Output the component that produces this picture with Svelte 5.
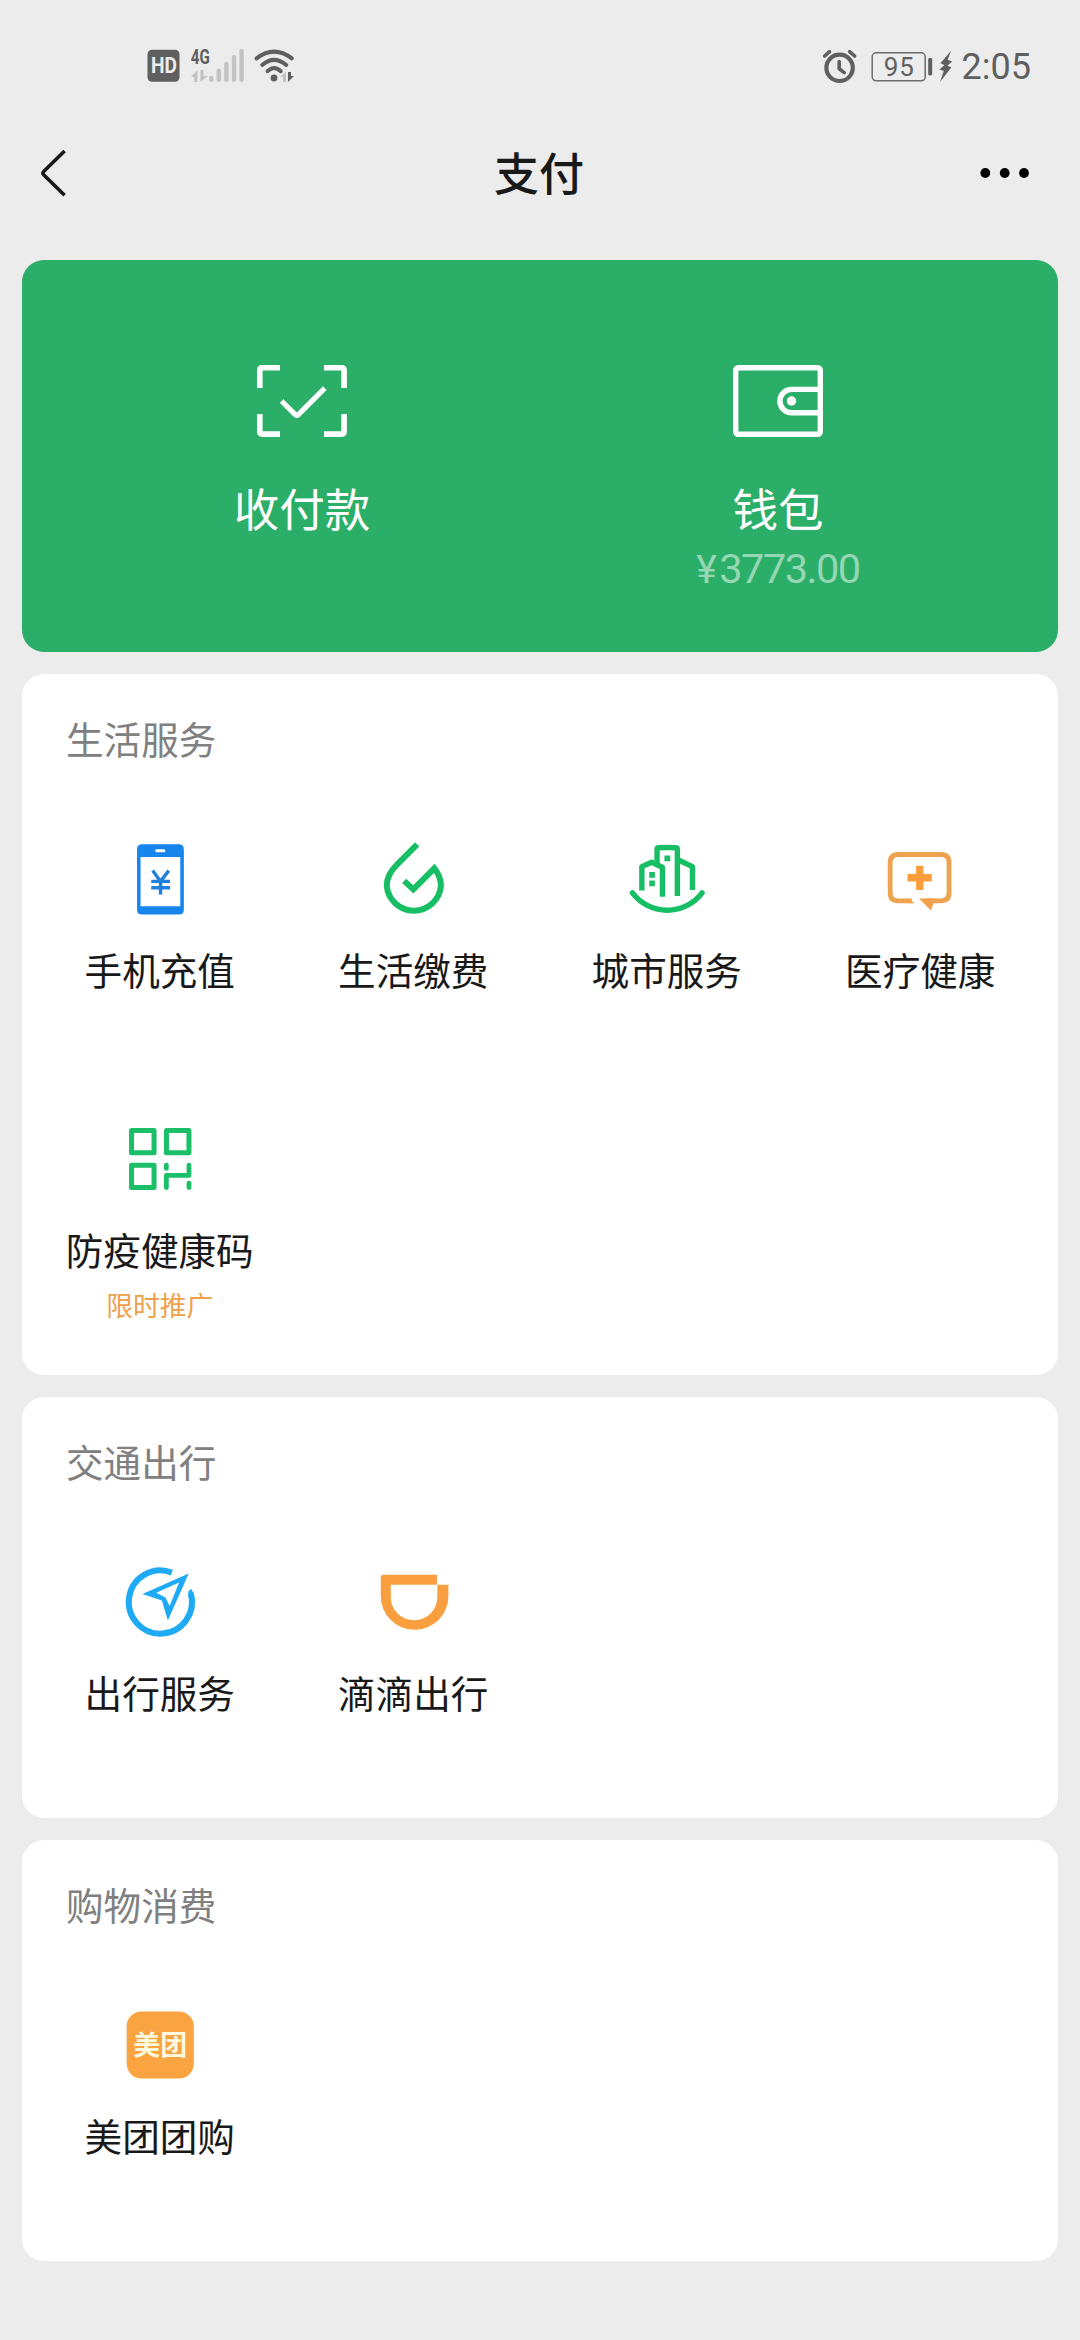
<script>
  const sections = [
    {
      title: '生活服务',
      rows: 2,
      items: [
        { icon: 'phone', label: '手机充值' },
        { icon: 'drop', label: '生活缴费' },
        { icon: 'city', label: '城市服务' },
        { icon: 'medical', label: '医疗健康' },
        { icon: 'qr', label: '防疫健康码', note: '限时推广' }
      ]
    },
    {
      title: '交通出行',
      items: [
        { icon: 'travel', label: '出行服务' },
        { icon: 'didi', label: '滴滴出行' }
      ]
    },
    {
      title: '购物消费',
      items: [{ icon: 'meituan', label: '美团团购' }]
    }
  ];
</script>

<main class="screen">
  <header class="status">
    <div class="status-left">
      <svg width="34" height="34" viewBox="147 50 34 34">
        <rect x="147.5" y="50.7" width="32" height="32" rx="4.5" fill="#5f5f5f" />
        <text x="151" y="74.3" font-size="22" font-weight="700" textLength="26" lengthAdjust="spacingAndGlyphs" fill="#ececec">HD</text>
      </svg>
      <svg class="signal" width="56" height="50" viewBox="190 41 56 50">
        <text x="190.8" y="64" font-size="21" font-weight="700" textLength="19" lengthAdjust="spacingAndGlyphs" fill="#5f5f5f">4G</text>
        <g stroke="#c3c3c3" stroke-width="4.4" stroke-linecap="round">
          <path d="M211.4 78V79.8M218.8 71V79.8M226.4 64V79.8M234 57.3V79.8M241.6 51.3V79.8" />
        </g>
        <path d="M191 77L197.4 70V82H194.2V77ZM200.4 70H203.4V76H208L200.4 82Z" fill="#c3c3c3" />
      </svg>
      <svg width="42" height="36" viewBox="253 48 42 36">
        <g fill="none" stroke="#5f5f5f" stroke-width="4" stroke-linecap="round">
          <path d="M255.6 58.4Q273 44.8 290.8 58.4" />
          <path d="M261.2 65Q273 54.6 285.2 65" />
          <path d="M266.6 71.2Q273 64.6 279.8 71.2" />
        </g>
        <circle cx="273" cy="78" r="3.4" fill="#5f5f5f" />
        <path d="M279 77L285 72V82H282V77Z" fill="#c3c3c3" />
        <path d="M287 72V82L293 76H290V72Z" fill="#5f5f5f" />
      </svg>
    </div>
    <div class="status-right">
      <svg width="36" height="36" viewBox="821 48 36 36">
        <circle cx="838.6" cy="67.8" r="13.2" fill="none" stroke="#5f5f5f" stroke-width="4.2" />
        <path d="M838.2 61.5V68.8L843.2 72.6" fill="none" stroke="#5f5f5f" stroke-width="3.6" stroke-linecap="round" stroke-linejoin="round" />
        <path d="M823.6 56L828.6 51.6M848.6 51.6L853.6 56" stroke="#5f5f5f" stroke-width="3.6" stroke-linecap="round" />
      </svg>
      <svg class="battery" width="84" height="36" viewBox="870 48 84 36">
        <rect x="871.2" y="52.8" width="53" height="28" rx="4" fill="none" stroke="#6c6c6c" stroke-width="1.5" />
        <text x="882.8" y="75.6" font-size="26" textLength="30" fill="#606060">95</text>
        <rect x="927.2" y="58" width="4" height="17.4" rx="1.4" fill="#5f5f5f" />
        <path d="M950.3 50.5L939.4 63.2L943.5 65L938.4 69.4L942.8 71L939 82L950.3 67.5L946.5 65.6L951.2 61.4L946.6 59.8Z" fill="#5f5f5f" />
      </svg>
      <span class="time">2:05</span>
    </div>
  </header>

  <nav class="nav">
    <svg width="30" height="52" viewBox="38 147 30 52">
      <path d="M64.6 151L43.9 171.2Q42 173.1 43.9 175L64.6 195.2" fill="none" stroke="#191919" stroke-width="3.6" />
    </svg>
    <h1>支付</h1>
    <svg width="52" height="14" viewBox="979 166 52 14">
      <circle cx="985.3" cy="173" r="4.9" />
      <circle cx="1004.7" cy="173" r="4.9" />
      <circle cx="1024" cy="173" r="4.9" />
    </svg>
  </nav>

  <section class="pay">
    <div class="pay-item">
      <svg width="96" height="80" viewBox="254 361 96 80">
        <g fill="none" stroke="#fff" stroke-width="5.6">
          <path d="M259.8 388V370.3Q259.8 367.8 262.3 367.8H280M324 367.8H341.5Q344.1 367.8 344.1 370.3V388M344.1 414V431.5Q344.1 434.1 341.5 434.1H324M280 434.1H262.3Q259.8 434.1 259.8 431.5V414" />
          <path d="M281.6 401L295 414.4Q296.8 416.2 298.6 414.4L324.8 388.2" stroke-width="5.2" />
        </g>
      </svg>
      <span class="pay-label">收付款</span>
    </div>
    <div class="pay-item">
      <svg width="96" height="80" viewBox="729 361 96 80">
        <g fill="none" stroke="#fff" stroke-width="5.4">
          <rect x="734.7" y="367.7" width="84.6" height="66.5" rx="2.5" />
          <path d="M819 389.4H790.6A11.7 11.7 0 0 0 790.6 412.8H819" />
        </g>
        <circle cx="790.5" cy="401" r="4.7" fill="#fff" />
      </svg>
      <span class="pay-label">钱包</span>
      <span class="amount"><span class="yen">¥</span>3773.00</span>
    </div>
  </section>

  {#each sections as section}
    <section class="card" class:tall={section.rows === 2}>
      <h2>{section.title}</h2>
      <div class="grid">
        {#each section.items as item}
          <div class="item">
            {#if item.icon === 'phone'}
              <svg width="90" height="90" viewBox="114.75 835 90 90">
                <path fill="#1685ec" fill-rule="evenodd" d="M142 844.3H178.5Q183.6 844.3 183.6 849.4V909.4Q183.6 914.6 178.5 914.6H142Q136.8 914.6 136.8 909.4V849.4Q136.8 844.3 142 844.3ZM140.3 857V906.2H180V857ZM156 849.3Q155 849.3 155 850.8Q155 852.2 156 852.2H164Q165 852.2 165 850.8Q165 849.3 164 849.3Z" />
                <path d="M152.4 870.6L160.3 881.4L168.5 870.6M160.3 881V894.6M151 881.4H169.8M151 887.7H169.8" fill="none" stroke="#1f80dd" stroke-width="3.4" />
              </svg>
            {:else if item.icon === 'drop'}
              <svg width="90" height="90" viewBox="368.25 835 90 90">
                <path d="M417.4 844.4L397 864.8Q387 874.6 387 885.8A27.2 27.2 0 0 0 441.2 885.8Q441.2 876.6 434.6 868.3L413.6 889.4L404.4 880.9" fill="none" stroke="#18be64" stroke-width="6" />
              </svg>
            {:else if item.icon === 'city'}
              <svg width="90" height="90" viewBox="621.75 835 90 90">
                <g fill="none" stroke="#18be64" stroke-width="5.4" stroke-linejoin="round">
                  <path d="M632.2 892.8A43.5 43.5 0 0 0 701.8 892.8" stroke-linecap="round" />
                  <path d="M641.6 890.5V866.6L651.4 862.2L662.2 867.2V896.8" />
                  <path d="M656.8 863V849.5Q656.8 847.8 658.5 847.8Q667 847.2 675.4 847.8Q677.1 847.8 677.1 849.5V896" />
                  <path d="M677.1 859.5L692.2 866.6V890" />
                </g>
                <path d="M664.2 855.6H670V861.2H664.2ZM649 872H654.6V877.8H649ZM649 880.6H654.6V886.2H649Z" fill="#18be64" />
              </svg>
            {:else if item.icon === 'medical'}
              <svg width="90" height="90" viewBox="875.25 835 90 90">
                <path d="M912 900.9H898.5Q890.4 900.9 890.4 892.8V862.6Q890.4 854.5 898.5 854.5H941.2Q949.3 854.5 949.3 862.6V892.8Q949.3 900.9 941.2 900.9H925" fill="none" stroke="#eda34f" stroke-width="4.8" />
                <path d="M909 898.5L914.8 903.3H908ZM919.2 898.5H935.5L931.2 910.6Z" fill="#f2a24a" />
                <path d="M916.4 865.7H923.7V874.1H932V881.4H923.7V890H916.4V881.4H907.8V874.1H916.4Z" fill="#fa9d3b" />
              </svg>
            {:else if item.icon === 'qr'}
              <svg width="90" height="90" viewBox="114.75 1115 90 90">
                <g fill="none" stroke="#1abf68" stroke-width="5" stroke-linejoin="round">
                  <rect x="131.3" y="1130.5" width="22.5" height="22.3" />
                  <rect x="166.2" y="1130.5" width="22.5" height="22.3" />
                  <rect x="131.3" y="1165.2" width="22.5" height="22.3" />
                </g>
                <g fill="none" stroke="#1abf68" stroke-width="4.8" stroke-linejoin="round">
                  <path d="M166.1 1187.6V1175.4H188.7V1165.2" stroke-linecap="round" />
                  <path d="M166.1 1165.2V1168.4M188.7 1183.2V1187.6" stroke-linecap="round" />
                </g>
              </svg>
            {:else if item.icon === 'travel'}
              <svg width="90" height="90" viewBox="114.75 1558 90 90">
                <path d="M171.6 1572.6A31.6 31.6 0 1 0 190.4 1593" fill="none" stroke="#1eaaf5" stroke-width="6" />
                <path d="M188.2 1596L188.2 1591.5L190.8 1588.8Q194 1593 194.4 1600Z" fill="#1eaaf5" />
                <path d="M188.5 1573.4L142.2 1594L161.6 1600.6L167.6 1620.6ZM178.8 1582.4L169.4 1606L165.2 1597.4L156 1592.7Z" fill="#1eaaf5" fill-rule="evenodd" />
              </svg>
            {:else if item.icon === 'didi'}
              <svg width="90" height="90" viewBox="368.25 1558 90 90">
                <path d="M384 1574.8H437.2V1584.8H391V1597A23.3 23.3 0 0 0 437.6 1597V1584.8H448.7V1596A33.85 33.85 0 0 1 381 1596V1577.8Q381 1574.8 384 1574.8Z" fill="#fa9f40" />
              </svg>
            {:else if item.icon === 'meituan'}
              <svg width="90" height="90" viewBox="114.75 2001 90 90">
                <rect x="126.4" y="2011.4" width="67.2" height="67.2" rx="15" fill="#faa341" />
                <text x="160" y="2055" text-anchor="middle" font-size="27" font-weight="700" fill="#fff9dc">美团</text>
              </svg>
            {/if}
            <span class="label">{item.label}</span>
            {#if item.note}<span class="note">{item.note}</span>{/if}
          </div>
        {/each}
      </div>
    </section>
  {/each}
</main>

<style>
  :global(body) {
    background: #ececec;
  }

  .screen {
    box-sizing: border-box;
    width: 1080px;
    height: 2340px;
    overflow: hidden;
    background: #ececec;
    font-family: Roboto, 'Noto Sans CJK SC', sans-serif;
    color: #191919;
  }

  svg {
    display: block;
    flex: none;
  }

  h1,
  h2 {
    margin: 0;
  }

  .status {
    box-sizing: border-box;
    display: flex;
    justify-content: space-between;
    height: 120px;
    padding: 47px 49px 0 147px;
  }

  .status-left,
  .status-right {
    display: flex;
    align-items: center;
    height: 38px;
  }

  .status-left {
    gap: 8px;
  }

  .signal {
    margin-left: 1px;
  }

  .status-right {
    gap: 7px;
  }

  .battery {
    margin-left: 6px;
  }

  .time {
    padding-top: 2px;
    font-size: 36px;
    line-height: 38px;
    color: #5f5f5f;
  }

  .nav {
    box-sizing: border-box;
    display: flex;
    align-items: center;
    justify-content: space-between;
    height: 106px;
    padding: 0 49px 0 38px;
    margin-bottom: 34px;
  }

  h1 {
    font-size: 45px;
    font-weight: 500;
    line-height: 60px;
    padding: 6px 0 0 31px;
  }

  .pay {
    box-sizing: border-box;
    display: grid;
    grid-template-columns: 476px 476px;
    justify-content: center;
    width: 1036px;
    height: 392px;
    margin: 0 22px;
    padding-top: 101px;
    border-radius: 22px;
    background: #2bae67;
    color: #fff;
  }

  .pay-item {
    display: flex;
    flex-direction: column;
    align-items: center;
  }

  .pay-label {
    margin-top: 41px;
    font-size: 45.5px;
    line-height: 60px;
  }

  .amount {
    margin-top: 3px;
    font-size: 41.5px;
    line-height: 48px;
    letter-spacing: -1.5px;
    color: #95d7b3;
  }

  .yen {
    margin-right: 4px;
    font-size: 39px;
  }

  .card {
    box-sizing: border-box;
    width: 1036px;
    height: 421px;
    margin: 22px 22px 0;
    padding: 41px 11px 0;
    border-radius: 22px;
    background: #fff;
  }

  .tall {
    height: 701px;
  }

  h2 {
    padding-left: 33px;
    font-size: 37.6px;
    font-weight: 400;
    line-height: 52px;
    color: #808080;
  }

  .grid {
    display: grid;
    grid-template-columns: repeat(4, 253.5px);
    grid-auto-rows: 280px;
    padding-top: 68px;
  }

  .item {
    display: flex;
    flex-direction: column;
    align-items: center;
    white-space: nowrap;
  }

  .label {
    margin-top: 21px;
    font-size: 37.6px;
    line-height: 52px;
  }

  .note {
    margin-top: 10px;
    font-size: 26.8px;
    line-height: 38px;
    color: #eea04c;
  }
</style>
